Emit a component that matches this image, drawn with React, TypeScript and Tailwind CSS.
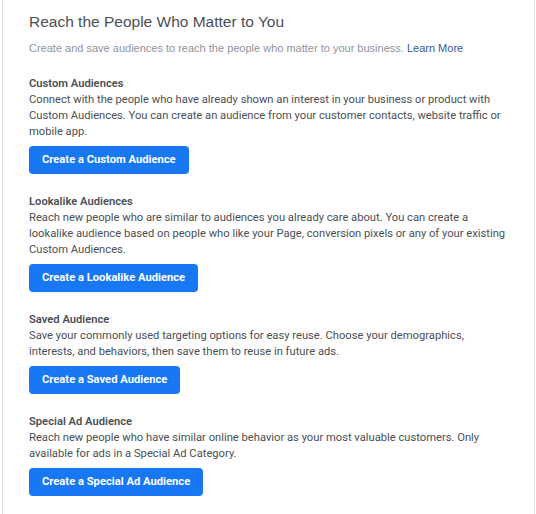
const sections = [
  {
    title: 'Custom Audiences',
    body: 'Connect with the people who have already shown an interest in your business or product with Custom Audiences. You can create an audience from your customer contacts, website traffic or mobile app.',
    action: 'Create a Custom Audience',
  },
  {
    title: 'Lookalike Audiences',
    body: 'Reach new people who are similar to audiences you already care about. You can create a lookalike audience based on people who like your Page, conversion pixels or any of your existing Custom Audiences.',
    action: 'Create a Lookalike Audience',
  },
  {
    title: 'Saved Audience',
    body: 'Save your commonly used targeting options for easy reuse. Choose your demographics, interests, and behaviors, then save them to reuse in future ads.',
    action: 'Create a Saved Audience',
  },
  {
    title: 'Special Ad Audience',
    body: 'Reach new people who have similar online behavior as your most valuable customers. Only available for ads in a Special Ad Category.',
    action: 'Create a Special Ad Audience',
  },
];

export default function App() {
  return (
    <div className="min-h-screen bg-white">
      <div className="ml-[2px] w-[533px] min-h-[514px] border-x border-[#dddfe2] pl-[26px] pr-[24px] pt-[11px] pb-4">
        <h1 className="text-[15.5px] leading-[22px] text-[#4b4f56] font-['Liberation_Sans',Arial,sans-serif]">
          Reach the People Who Matter to You
        </h1>
        <p className="mt-[7px] text-[11px] leading-4 text-[#90949c] font-['Liberation_Sans',Arial,sans-serif]">
          Create and save audiences to reach the people who matter to your business.{' '}
          <a href="#" className="text-[#365899]">Learn More</a>
        </p>
        <div className="mt-5 flex flex-col gap-5 font-['Roboto',sans-serif] text-[11.2px] leading-4 text-[#4b4f56]">
          {sections.map((s) => (
            <section key={s.title}>
              <h2 className="font-semibold">{s.title}</h2>
              <p>{s.body}</p>
              <button className="mt-[6px] h-[28px] px-[13px] rounded-[4px] bg-[#1877f2] text-white font-bold text-[11.2px]">
                {s.action}
              </button>
            </section>
          ))}
        </div>
      </div>
    </div>
  );
}
